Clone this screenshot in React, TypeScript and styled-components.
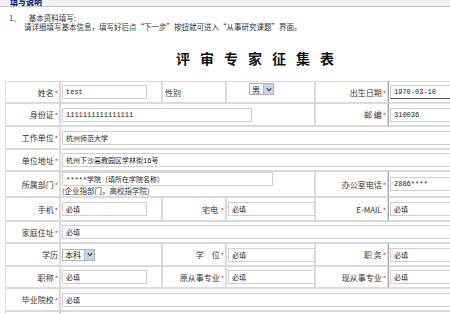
import { createGlobalStyle, styled } from "styled-components";

const GlobalStyle = createGlobalStyle`
	body {
		margin: 0;
		background: #ffffff;
		overflow: hidden;
		font-family: "Liberation Mono", "Noto Sans CJK SC", monospace;
		color: #333333;
	}
`;

const Page = styled.div`
	width: 510px;
`;

const HelpBar = styled.div`
	height: 6px;
	line-height: 4px;
	padding-left: 10px;
	background: #f2f2f2;
	border-bottom: 1px solid #c8c8c8;
	font-family: "Noto Sans CJK SC", sans-serif;
	font-size: 8px;
	font-weight: 900;
	color: #12307e;
	overflow: hidden;
`;

const Notes = styled.div`
	padding: 6px 0 0 9px;
	font-family: "Noto Sans CJK SC", sans-serif;
	font-size: 7.5px;
	line-height: 9px;
	color: #333333;
`;

const NoteLine = styled.div<{ $indent?: boolean }>`
	display: flex;
	gap: 8px;
	height: 9px;
	padding-left: ${(p) => (p.$indent ? "15px" : "0")};
`;

const Title = styled.h1`
	margin: 0;
	padding: 19px 0 0 10px;
	height: 31px;
	text-align: center;
	font-family: "Noto Sans CJK SC", serif;
	font-size: 14px;
	line-height: 16px;
	font-weight: bold;
	letter-spacing: 10px;
	color: #111111;
`;

const FormTable = styled.table`
	margin-left: 5px;
	width: 500px;
	table-layout: fixed;
	border-collapse: separate;
	border-spacing: 0;
	font-size: 8px;
`;

const Row = styled.tr<{ $h: number }>`
	height: ${(p) => p.$h}px;
`;

const LabelCell = styled.td<{ $left?: boolean }>`
	border: 1px solid #dadada;
	padding: 0 1px 0 2px;
	text-align: ${(p) => (p.$left ? "left" : "right")};
	white-space: nowrap;
	vertical-align: middle;
	font-family: "Noto Sans CJK SC", sans-serif;
	color: #333333;
`;

const ValueCell = styled.td<{ $edge?: boolean; $top?: boolean }>`
	border: 1px solid #dadada;
	border-left-color: ${(p) => (p.$edge ? "#a8a8a8" : "#dadada")};
	padding: ${(p) => (p.$top ? "1px 0 0 1px" : "0 0 0 1px")};
	vertical-align: ${(p) => (p.$top ? "top" : "middle")};
	white-space: nowrap;
	overflow: hidden;
`;

const Star = styled.span`
	color: #d01010;
	font-size: 7px;
	margin-left: 1px;
`;

const Field = styled.input<{ $w: number; $line?: boolean }>`
	box-sizing: border-box;
	width: ${(p) => p.$w}px;
	height: 14px;
	margin: 0;
	padding: 0 3px;
	border: 1px solid #cfcfcf;
	border-bottom-color: ${(p) => (p.$line ? "#555555" : "#cfcfcf")};
	font-family: "Liberation Mono", "Noto Sans CJK SC", monospace;
	font-size: 7px;
	color: #222222;
	background: #ffffff;
	outline: none;
	vertical-align: middle;
`;

const Hint = styled.div`
	font-family: "Noto Sans CJK SC", sans-serif;
	font-size: 7.5px;
	line-height: 10px;
	color: #333333;
`;

const SelectBox = styled.span<{ $offset?: number }>`
	display: inline-flex;
	align-items: center;
	margin-left: ${(p) => p.$offset ?? 0}px;
	height: 10px;
	border: 1px solid #a9b3c2;
	background: #ffffff;
	font-family: "Noto Sans CJK SC", sans-serif;
	font-size: 8px;
	color: #222222;
	vertical-align: middle;
`;

const SelectText = styled.span`
	padding: 0 3px 0 2px;
`;

const SelectButton = styled.span`
	display: inline-flex;
	align-items: center;
	justify-content: center;
	width: 9px;
	height: 10px;
	background: #c9d3e3;
	border-left: 1px solid #b2bccb;
`;

const Chevron = () => (
	<svg width="6" height="5" viewBox="0 0 6 5">
		<path d="M0.8 1.2 L3 3.6 L5.2 1.2" fill="none" stroke="#3a4a6a" strokeWidth="1.3" />
	</svg>
);

function Label({ text, star = true, left }: { text: string; star?: boolean; left?: boolean }) {
	return (
		<LabelCell $left={left}>
			{text}
			{star && <Star>*</Star>}
		</LabelCell>
	);
}

function Select({ value, offset }: { value: string; offset?: number }) {
	return (
		<SelectBox $offset={offset}>
			<SelectText>{value}</SelectText>
			<SelectButton>
				<Chevron />
			</SelectButton>
		</SelectBox>
	);
}

function App() {
	return (
		<Page>
			<GlobalStyle />
			<HelpBar>填写说明</HelpBar>
			<Notes>
				<NoteLine>
					<span>1、</span>
					<span>基本资料填写:</span>
				</NoteLine>
				<NoteLine $indent>
					请详细填写基本信息，填写好后点“下一步”按钮就可进入“从事研究课题”界面。
				</NoteLine>
			</Notes>
			<Title>评审专家征集表</Title>
			<FormTable>
				<colgroup>
					<col style={{ width: 55 }} />
					<col style={{ width: 102 }} />
					<col style={{ width: 64 }} />
					<col style={{ width: 89 }} />
					<col style={{ width: 73 }} />
					<col style={{ width: 117 }} />
				</colgroup>
				<tbody>
					<Row $h={22}>
						<Label text="姓名" />
						<ValueCell>
							<Field $w={85} readOnly defaultValue="test" />
						</ValueCell>
						<Label text="性别" star={false} left />
						<ValueCell $top>
							<Select value="男" offset={21} />
						</ValueCell>
						<Label text="出生日期" />
						<ValueCell $edge>
							<Field $w={112} $line readOnly defaultValue="1970-03-10" />
						</ValueCell>
					</Row>
					<Row $h={23}>
						<Label text="身份证" />
						<ValueCell colSpan={3}>
							<Field $w={190} readOnly defaultValue="1111111111111111" />
						</ValueCell>
						<Label text="邮 编" />
						<ValueCell $edge>
							<Field $w={112} readOnly defaultValue="310036" />
						</ValueCell>
					</Row>
					<Row $h={23}>
						<Label text="工作单位" />
						<ValueCell colSpan={5}>
							<Field $w={436} readOnly defaultValue="杭州师范大学" />
						</ValueCell>
					</Row>
					<Row $h={22}>
						<Label text="单位地址" />
						<ValueCell colSpan={5}>
							<Field $w={436} readOnly defaultValue="杭州下沙高教园区学林街16号" />
						</ValueCell>
					</Row>
					<Row $h={26}>
						<Label text="所属部门" />
						<ValueCell colSpan={3}>
							<Field $w={211} readOnly defaultValue="*****学院（填所在学院名称）" />
							<Hint>(企业指部门，高校指学院)</Hint>
						</ValueCell>
						<Label text="办公室电话" />
						<ValueCell $edge>
							<Field $w={112} readOnly defaultValue="2886****" />
						</ValueCell>
					</Row>
					<Row $h={24}>
						<Label text="手机" />
						<ValueCell>
							<Field $w={85} readOnly defaultValue="必填" />
						</ValueCell>
						<Label text="宅电 " />
						<ValueCell>
							<Field $w={87} readOnly defaultValue="必填" />
						</ValueCell>
						<Label text="E-MAIL" />
						<ValueCell $edge>
							<Field $w={112} readOnly defaultValue="必填" />
						</ValueCell>
					</Row>
					<Row $h={22}>
						<Label text="家庭住址" />
						<ValueCell colSpan={5}>
							<Field $w={436} readOnly defaultValue="必填" />
						</ValueCell>
					</Row>
					<Row $h={23}>
						<Label text="学历" star={false} />
						<ValueCell>
							<Select value="本科" />
						</ValueCell>
						<Label text="学　位" />
						<ValueCell>
							<Field $w={87} readOnly defaultValue="必填" />
						</ValueCell>
						<Label text="职 务" />
						<ValueCell $edge>
							<Field $w={112} readOnly defaultValue="必填" />
						</ValueCell>
					</Row>
					<Row $h={22}>
						<Label text="职称" />
						<ValueCell>
							<Field $w={85} readOnly defaultValue="必填" />
						</ValueCell>
						<Label text="原从事专业" />
						<ValueCell>
							<Field $w={87} readOnly defaultValue="必填" />
						</ValueCell>
						<Label text="现从事专业" />
						<ValueCell $edge>
							<Field $w={112} readOnly defaultValue="必填" />
						</ValueCell>
					</Row>
					<Row $h={23}>
						<Label text="毕业院校" />
						<ValueCell colSpan={5}>
							<Field $w={436} readOnly defaultValue="必填" />
						</ValueCell>
					</Row>
					<Row $h={22}>
						<Label text="" star={false} />
						<ValueCell colSpan={5} />
					</Row>
				</tbody>
			</FormTable>
		</Page>
	);
}

export default App;
